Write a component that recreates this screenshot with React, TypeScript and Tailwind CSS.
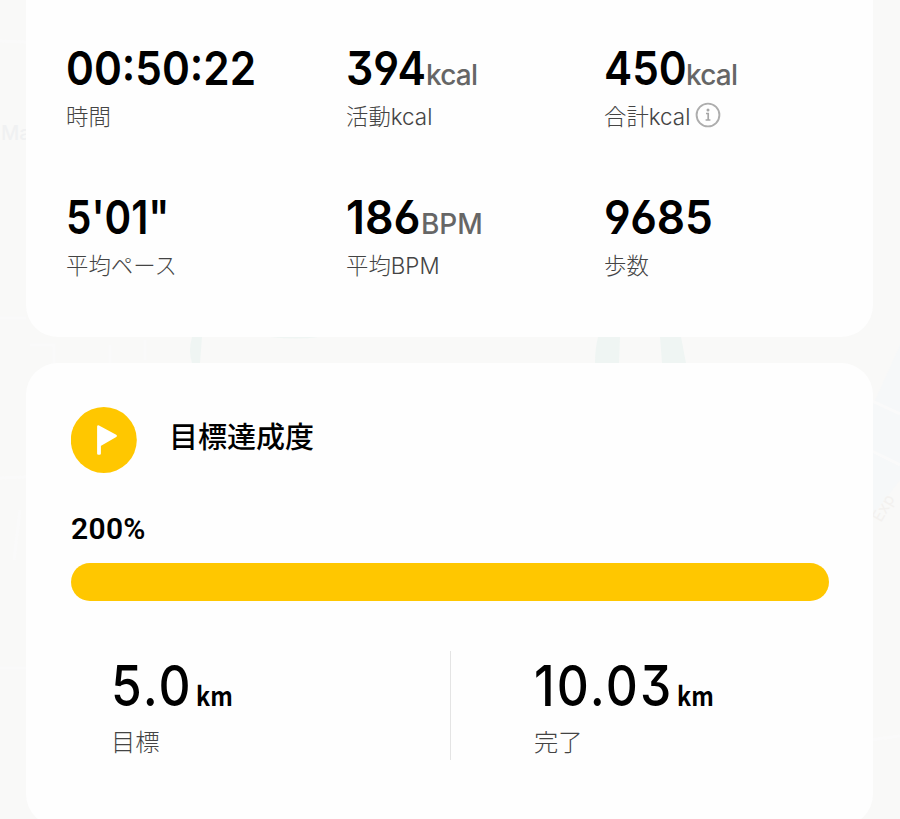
import type { ReactNode } from 'react';

const LABEL = "font-['Inter','Noto_Sans_CJK_JP',sans-serif] font-light text-[#444] whitespace-nowrap";
const NUM = "inline-block origin-left font-['Inter','Noto_Sans_CJK_JP',sans-serif] whitespace-nowrap [font-feature-settings:'cv03'_1,'cv04'_1,'cv09'_1,'case'_1]";

function MapBackdrop() {
  return (
    <svg className="absolute inset-0 -z-10" width="900" height="819" viewBox="0 0 900 819" aria-hidden="true">
      <rect width="900" height="819" fill="#f9f9f8" />
      <g fill="#eff5f3">
        <path d="M192 337h10l-2 26h-8q-4-12 0-26z" />
        <path d="M598 337h22l-1 26h-24q0-14 3-26z" />
        <path d="M660 337h21l5 26h-24z" />
        <path d="M270 337h48q-20 3-48 0z" />
      </g>
      <path d="M900 345q-18 40-27 60v110l27-35z" fill="#f6f8f9" />
      <g stroke="#fafafa" strokeWidth="3" fill="none">
        <path d="M0 41l26 1M0 318h26M0 478l26-1M0 668h26M20 510l-6 50M30 345h24v18M110 345v18M145 340v20M870 400l30 14M870 450l30 15M870 740l30-4" />
      </g>
      <text x="1" y="140" fontSize="20" fill="#f0f1f2" fontFamily="Inter, sans-serif" fontWeight="500">Ma</text>
      <text x="881" y="523" fontSize="16" fill="#f3f1ef" fontFamily="Inter, sans-serif" transform="rotate(-60 881 523)">Exp</text>
    </svg>
  );
}

function InfoIcon() {
  return (
    <svg className="-mt-[4px] ml-[5px] shrink-0" width="26" height="26" viewBox="0 0 26 26" fill="none">
      <circle cx="13" cy="13" r="11.4" stroke="#adadad" strokeWidth="1.9" />
      <circle cx="13" cy="8" r="1.5" fill="#a6a6a6" />
      <path d="M11 11.5h2.2v6.2M10.6 18h4.8" stroke="#a6a6a6" strokeWidth="1.7" />
    </svg>
  );
}

type StatProps = { value: string; unit?: string; label: ReactNode; fit: string; unitFit?: string; info?: boolean };

function Stat({ value, unit, label, fit, unitFit = '', info }: StatProps) {
  return (
    <div className="h-[149px]">
      <div className="flex h-[50px] items-baseline leading-[50px]">
        <span className={`${NUM} text-[47px] font-semibold text-black ${fit}`}>{value}</span>
        {unit && <span className={`${NUM} text-[28px] font-medium text-[#666] ${unitFit}`}>{unit}</span>}
      </div>
      <div className={`${LABEL} mt-[9px] flex h-[30px] items-center text-[22.4px] leading-[30px]`}>
        {label}
        {info && <InfoIcon />}
      </div>
    </div>
  );
}

type DistanceProps = { value: string; fit: string; label: string };

function Distance({ value, fit, label }: DistanceProps) {
  return (
    <>
      <div className="flex h-[60px] items-baseline leading-[60px]">
        <span className={`${NUM} text-[56.5px] font-medium text-black ${fit}`}>{value}</span>
        <span className="inline-block origin-left scale-x-[0.9] font-['Noto_Sans_CJK_JP',sans-serif] text-[26px] font-bold text-black">km</span>
      </div>
      <div className={`${LABEL} mt-[8px] text-[24.3px] leading-[36px]`}>{label}</div>
    </>
  );
}

export default function App() {
  return (
    <div className="relative isolate flex h-[819px] w-[900px] flex-col overflow-hidden px-[26px]">
      <MapBackdrop />

      <section className="mr-px h-[337px] shrink-0 rounded-b-[32px] bg-[#fefefe] pl-[40px] pt-[43px]">
        <div className="grid grid-cols-[280px_258px_1fr]">
          <Stat value="00:50:22" label="時間" fit="scale-x-[0.9]" />
          <Stat value="394" unit="kcal" label="活動kcal" fit="w-[80px] scale-x-[0.91]" unitFit="tracking-[-0.8px]" />
          <Stat value="450" unit="kcal" label="合計kcal" fit="w-[82px] scale-x-[0.9]" unitFit="tracking-[-0.8px]" info />
          <Stat value={`5'01"`} label="平均ペース" fit="scale-x-[0.86]" />
          <Stat value="186" unit="BPM" label="平均BPM" fit="w-[75px] scale-x-[0.95]" unitFit="tracking-[-0.1px]" />
          <Stat value="9685" label="歩数" fit="scale-x-[0.94]" />
        </div>
      </section>

      <section className="mr-px mt-[26px] h-[463px] shrink-0 rounded-[32px] bg-[#fefefe] px-[45px] pt-[44px]">
        <header className="flex items-center">
          <svg width="67" height="67" viewBox="0 0 67 67">
            <circle cx="32.8" cy="33" r="33" fill="#ffc700" />
            <path d="M27.4 46.5V19.6L44.6 28.8L28.6 38V46.5Z" fill="#fff" stroke="#fff" strokeWidth="2.6" strokeLinejoin="round" />
          </svg>
          <h2 className="-mt-[11px] ml-[31px] font-['Noto_Sans_CJK_JP',sans-serif] text-[29px] font-medium leading-[40px] text-black">
            目標達成度
          </h2>
        </header>
        <div className="mt-[37px] font-['Roboto',sans-serif] text-[30px] font-semibold leading-[36px] tracking-[0.3px] text-black">
          200%
        </div>
        <div className="mt-[16px] h-[38px] w-[758px] rounded-full bg-[#ffc700]" />

        <div className="mt-[50px] flex">
          <div className="h-[109px] w-[380px] border-r border-[#e4e4e4] pl-[40px] pt-[5px]">
            <Distance value="5.0" fit="w-[85px] scale-x-[0.88] tracking-[2.5px]" label="目標" />
          </div>
          <div className="pl-[83px] pt-[5px]">
            <Distance value="10.03" fit="w-[143px] scale-x-[0.88] tracking-[2.5px]" label="完了" />
          </div>
        </div>
      </section>
    </div>
  );
}
